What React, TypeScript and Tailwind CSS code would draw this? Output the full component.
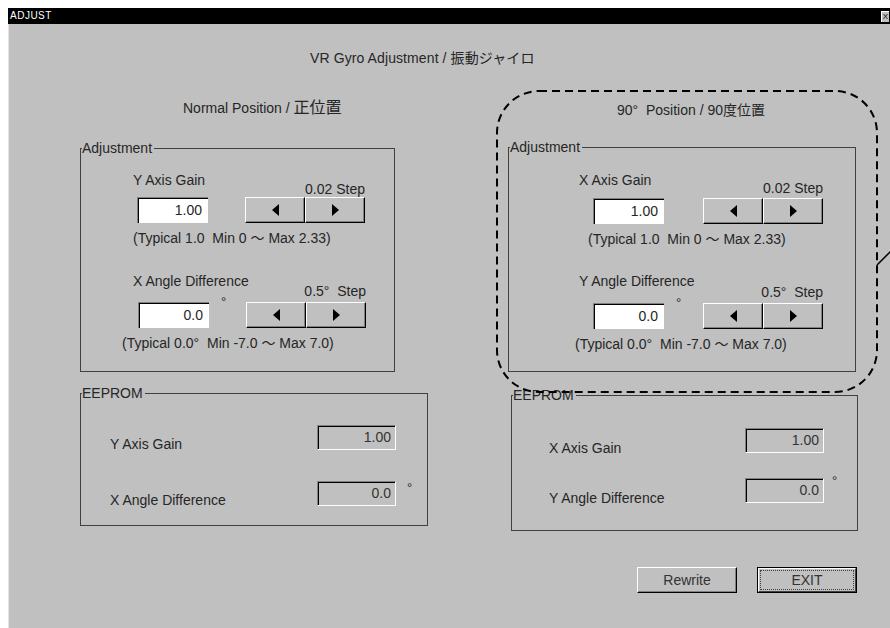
import React from 'react';

const FONT = "[font-family:'Liberation_Sans','Noto_Sans_CJK_JP',sans-serif]";

const Tri: React.FC<{ dir: 'left' | 'right' }> = ({ dir }) => (
  <svg width="7" height="12" viewBox="0 0 7 12">
    {dir === 'left' ? <polygon points="7,0 7,12 0,6" fill="#000" /> : <polygon points="0,0 0,12 7,6" fill="#000" />}
  </svg>
);

const Spin: React.FC = () => (
  <div className="flex">
    {(['left', 'right'] as const).map((d) => (
      <div
        key={d}
        className="w-[60px] h-[26px] flex items-center justify-center bg-[#c0c0c0] border-t border-l border-white border-b border-r border-b-black border-r-black shadow-[inset_-1px_-1px_0_#808080]"
      >
        <Tri dir={d} />
      </div>
    ))}
  </div>
);

type CtrlProps = {
  label: string;
  value: string;
  step: string;
  typical: string;
  deg?: boolean;
  wrapCls: string;
  colCls: string;
  inputCls: string;
  gapCls: string;
  labelGapCls: string;
  stepGapCls: string;
  typCls: string;
};

const Control: React.FC<CtrlProps> = (p) => (
  <div>
    <div className={`flex items-end ${p.wrapCls}`}>
      <div className={`flex flex-col ${p.colCls}`}>
        <span className="h-4 leading-4 whitespace-nowrap">{p.label}</span>
        <div
          className={`${p.labelGapCls} ${p.inputCls} w-[71px] h-[26px] bg-white border-t border-l border-[#808080] shadow-[inset_1px_1px_0_#000] text-right pr-[6px] leading-[24px]`}
        >
          {p.value}
        </div>
      </div>
      <div className={`${p.gapCls} h-[34px] pl-[12px] leading-4 text-[13px]`}>{p.deg ? '°' : ''}</div>
      <div className="flex flex-col items-end">
        <span className={`h-4 leading-4 whitespace-pre ${p.stepGapCls}`}>{p.step}</span>
        <Spin />
      </div>
    </div>
    <div className={`mt-[7px] h-4 leading-4 whitespace-pre ${p.typCls}`}>{p.typical}</div>
  </div>
);

const GroupBox: React.FC<{ title: string; cls: string; children: React.ReactNode }> = ({ title, cls, children }) => (
  <div className={`relative border border-[#404040] ${cls}`}>
    <span className="absolute -top-[9px] left-[1px] bg-[#c0c0c0] leading-4 pr-[2px]">{title}</span>
    {children}
  </div>
);

const Readout: React.FC<{ value: string }> = ({ value }) => (
  <div className="w-[79px] h-[25px] bg-[#c0c0c0] border-t border-l border-[#808080] border-b border-r border-b-white border-r-white shadow-[inset_1px_1px_0_#000] text-right pr-[4px] leading-[23px] text-[#333]">
    {value}
  </div>
);

const EepromRow: React.FC<{ label: string; value: string; deg?: boolean; labelCls: string; degCls: string; rowCls: string }> = (p) => (
  <div className={`flex items-start ${p.rowCls}`}>
    <span className={`h-4 leading-4 whitespace-nowrap ${p.labelCls}`}>{p.label}</span>
    <Readout value={p.value} />
    {p.deg && <span className={`leading-4 text-[13px] ${p.degCls}`}>°</span>}
  </div>
);

const WinButton: React.FC<{ label: string; primary?: boolean }> = ({ label, primary }) =>
  primary ? (
    <div className="w-[100px] h-[26px] border border-black bg-[#c0c0c0] flex">
      <div className="flex-1 border-t border-l border-white border-b border-r border-b-[#404040] border-r-[#404040] p-[1px]">
        <div className="w-full h-full border border-dotted border-[#404040] flex items-center justify-center leading-4 text-[#333]">
          {label}
        </div>
      </div>
    </div>
  ) : (
    <div className="w-[100px] h-[26px] bg-[#c0c0c0] border-t border-l border-white border-b border-r border-b-black border-r-black shadow-[inset_-1px_-1px_0_#808080] flex items-center justify-center leading-4 text-[#333]">
      {label}
    </div>
  );

export default function App() {
  return (
    <div className={`w-[890px] h-[628px] bg-white overflow-hidden pt-2 pl-2 text-[14px] text-[#262626] ${FONT}`}>
      <div className="w-[882px] flex flex-col">
        <div className="h-4 bg-black flex items-center pl-[2px] pr-[1px]">
          <span className="text-white text-[10px] leading-4 tracking-[0.5px]">ADJUST</span>
          <div className="ml-auto w-[8px] h-[11px] bg-[#c0c0c0] border-t border-l border-white text-[8px] leading-[10px] text-black text-center overflow-hidden">
            X
          </div>
        </div>

        <div className="relative h-[604px] bg-[#c0c0c0] shadow-[inset_1px_0_0_#e4e4e4]">
          <div className="pt-[26px] pl-[302px] h-[42px] leading-4 tracking-[0.1px]">VR Gyro Adjustment / 振動ジャイロ</div>

          <div className="flex mt-[34px]">
            {/* Normal position */}
            <div className="ml-[72px] w-[348px] flex flex-col">
              <div className="h-4 leading-4 pl-[103px] whitespace-nowrap">
                Normal Position / <span className="text-[16px]">正位置</span>
              </div>
              <GroupBox title="Adjustment" cls="mt-[32px] w-[315px] h-[224px] pt-[23px]">
                <Control
                  label="Y Axis Gain"
                  value="1.00"
                  step="0.02 Step"
                  typical="(Typical 1.0  Min 0 ～ Max 2.33)"
                  wrapCls="pl-[52px]"
                  colCls="w-[75px]"
                  inputCls="ml-[4px]"
                  gapCls="w-[37px]"
                  labelGapCls="mt-[9px]"
                  stepGapCls="mb-0"
                  typCls="pl-[52px]"
                />
                <div className="mt-[27px]">
                  <Control
                    label="X Angle Difference"
                    value="0.0"
                    step="0.5°  Step"
                    typical="(Typical 0.0°  Min -7.0 ～ Max 7.0)"
                    deg
                    wrapCls="pl-[52px]"
                    colCls="w-[76px]"
                    inputCls="ml-[5px]"
                    gapCls="w-[37px]"
                    labelGapCls="mt-[13px]"
                    stepGapCls="mb-[3px]"
                    typCls="pl-[41px]"
                  />
                </div>
              </GroupBox>
              <GroupBox title="EEPROM" cls="mt-[21px] w-[348px] h-[133px] pt-[31px]">
                <EepromRow label="Y Axis Gain" value="1.00" rowCls="" labelCls="w-[236px] pl-[29px] pt-[11px]" degCls="" />
                <EepromRow
                  label="X Angle Difference"
                  value="0.0"
                  deg
                  rowCls="mt-[31px]"
                  labelCls="w-[236px] pl-[29px] pt-[11px]"
                  degCls="ml-[11px] -mt-[1px]"
                />
              </GroupBox>
            </div>

            {/* 90 degree position */}
            <div className="ml-[80px] w-[350px] flex flex-col">
              <div className="mt-[2px] h-4 leading-4 pl-[109px] whitespace-pre">90°  Position / 90度位置</div>
              <GroupBox title="Adjustment" cls="mt-[29px] w-[348px] h-[225px] pt-[24px]">
                <Control
                  label="X Axis Gain"
                  value="1.00"
                  step="0.02 Step"
                  typical="(Typical 1.0  Min 0 ～ Max 2.33)"
                  wrapCls="pl-[70px]"
                  colCls="w-[85px]"
                  inputCls="ml-[14px]"
                  gapCls="w-[39px]"
                  labelGapCls="mt-[10px]"
                  stepGapCls="mb-[2px]"
                  typCls="pl-[79px]"
                />
                <div className="mt-[26px]">
                  <Control
                    label="Y Angle Difference"
                    value="0.0"
                    step="0.5°  Step"
                    typical="(Typical 0.0°  Min -7.0 ～ Max 7.0)"
                    deg
                    wrapCls="pl-[70px]"
                    colCls="w-[85px]"
                    inputCls="ml-[14px]"
                    gapCls="w-[39px]"
                    labelGapCls="mt-[14px]"
                    stepGapCls="mb-[3px]"
                    typCls="pl-[66px]"
                  />
                </div>
              </GroupBox>
              <GroupBox title="EEPROM" cls="mt-[23px] ml-[3px] w-[347px] h-[136px] pt-[32px]">
                <EepromRow label="X Axis Gain" value="1.00" rowCls="" labelCls="w-[233px] pl-[37px] pt-[12px]" degCls="" />
                <EepromRow
                  label="Y Angle Difference"
                  value="0.0"
                  deg
                  rowCls="mt-[25px]"
                  labelCls="w-[233px] pl-[37px] pt-[12px]"
                  degCls="ml-[8px] -mt-[5px]"
                />
              </GroupBox>
              <div className="flex gap-[20px] mt-[36px] ml-[129px]">
                <WinButton label="Rewrite" />
                <WinButton label="EXIT" primary />
              </div>
            </div>
          </div>

          {/* dashed highlight around the 90° adjustment block, with leader line */}
          <svg className="absolute left-[488px] top-[66px]" width="394" height="304" viewBox="0 0 394 304">
            <rect x="1" y="1" width="380" height="301" rx="42" ry="42" fill="none" stroke="#000" strokeWidth="2" strokeDasharray="8 5" />
            <line x1="381" y1="175" x2="396" y2="160" stroke="#000" strokeWidth="1.5" />
          </svg>
        </div>
      </div>
    </div>
  );
}
